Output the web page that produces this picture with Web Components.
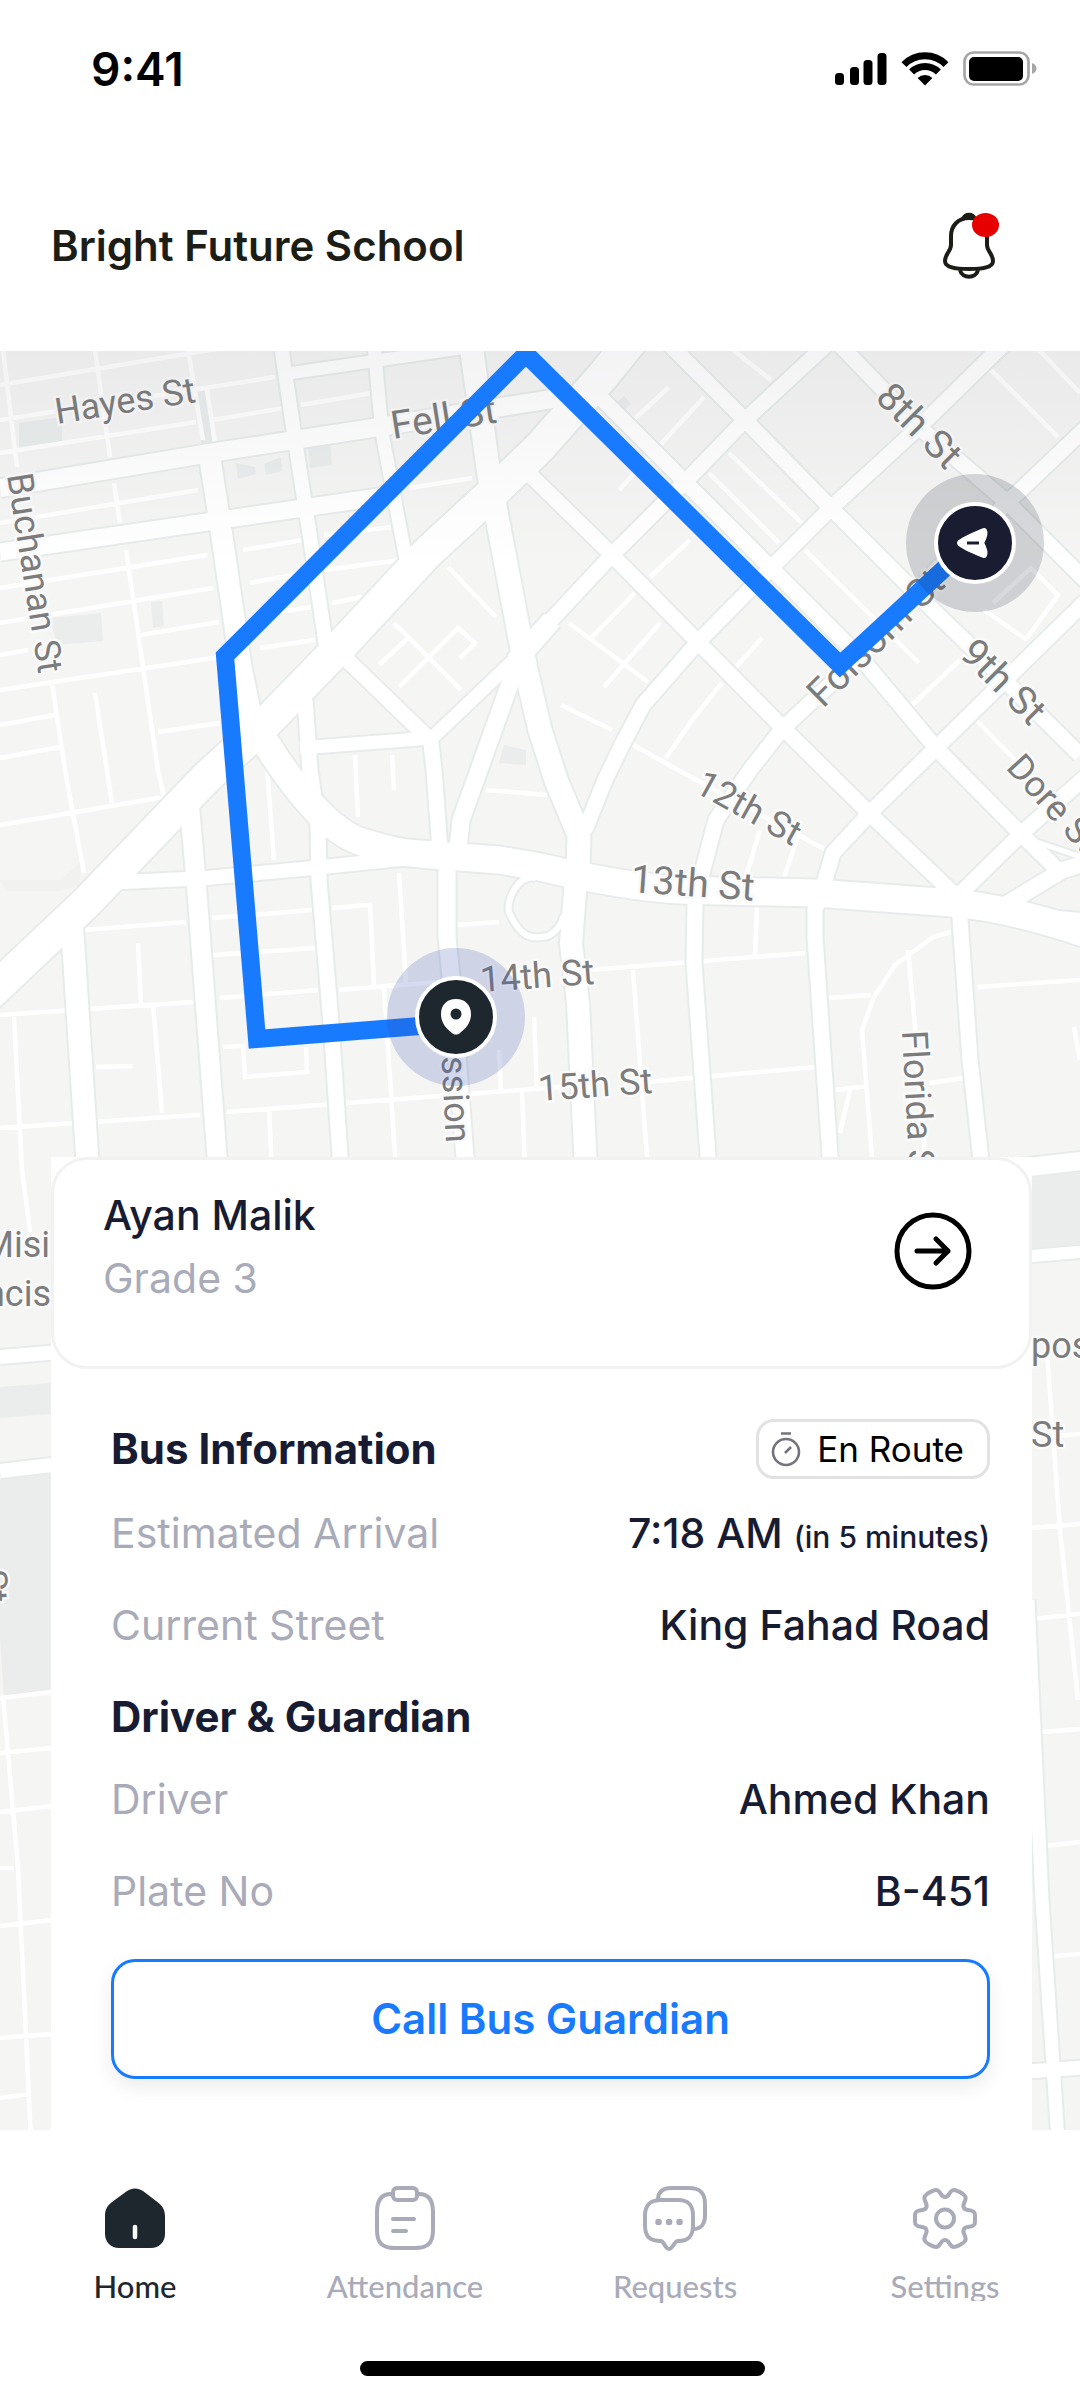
<!DOCTYPE html>
<html lang="en">
<head>
<meta charset="utf-8">
<meta name="viewport" content="width=device-width, initial-scale=1">
<title>Bright Future School</title>
<style>
body {
  margin: 0;
  background: #fff;
  color: #171c33;
  font-family: Inter, "Liberation Sans", sans-serif;
  font-size: 41px;
}
</style>
</head>
<body>
<status-bar>9:41</status-bar>
<app-header>Bright Future School</app-header>
<main>
  <route-map>
    <bus-panel>
      <student-card slot="student">
        <span slot="name">Ayan Malik</span>
        <span slot="grade">Grade 3</span>
      </student-card>
      <info-head>Bus Information <status-pill slot="aside">En Route</status-pill></info-head>
      <info-row label="Estimated Arrival">7:18 AM <small slot="note">(in 5 minutes)</small></info-row>
      <info-row label="Current Street">King Fahad Road</info-row>
      <info-head>Driver &amp; Guardian</info-head>
      <info-row label="Driver">Ahmed Khan</info-row>
      <info-row label="Plate No">B-451</info-row>
      <call-button slot="action">Call Bus Guardian</call-button>
    </bus-panel>
  </route-map>
</main>
<tab-bar>
  <tab-item icon="home" active>Home</tab-item>
  <tab-item icon="clipboard">Attendance</tab-item>
  <tab-item icon="chat">Requests</tab-item>
  <tab-item icon="gear" tight>Settings</tab-item>
</tab-bar>

<script type="module">
const html = (strings, ...parts) => {
	const tpl = document.createElement('template')
	tpl.innerHTML = String.raw({raw: strings}, ...parts)
	return tpl
}

const define = (name, tpl, init) => customElements.define(name, class extends HTMLElement {
	constructor() {
		super()
		this.attachShadow({mode: 'open'}).append(tpl.content.cloneNode(true))
	}
	connectedCallback() {
		if (init) init(this, this.shadowRoot)
	}
})

define('status-bar', html`
<style>
:host {
  align-items: center;
  box-sizing: border-box;
  color: #000;
  display: flex;
  font-size: 46px;
  font-weight: 600;
  height: 137px;
  justify-content: space-between;
  padding: 0 42px 0 91px;
}
svg { display: block; height: 38px; width: 203px; }
</style>
<slot></slot>
<svg viewBox="0 0 203 38" aria-hidden="true">
  <rect x="0" y="23" width="9" height="12" rx="3.5"/>
  <rect x="15" y="17" width="9" height="18" rx="3.5"/>
  <rect x="28.5" y="10" width="9" height="25" rx="3.5"/>
  <rect x="42.5" y="3" width="9" height="32" rx="3.5"/>
  <g fill="none" stroke="#000" stroke-width="7">
    <path d="M69 14.6A29.5 29.5 0 0 1 111 14.6"/>
    <path d="M76.6 22.1A19 19 0 0 1 103.4 22.1"/>
  </g>
  <path d="M90 35.5L82.6 28A10.5 10.5 0 0 1 97.4 28Z"/>
  <rect x="129.5" y="2.5" width="64" height="32" rx="9" fill="none" stroke="#a6a6a6" stroke-width="2.7"/>
  <rect x="134" y="7" width="54" height="24" rx="5"/>
  <path d="M197 13C203 15 203 22 197 24Z" fill="#a6a6a6"/>
</svg>`)

define('app-header', html`
<style>
:host {
  align-items: center;
  box-sizing: border-box;
  color: #1b1d16;
  display: flex;
  height: 214px;
  justify-content: space-between;
  padding: 0 80px 0 51px;
}
h1 { font-size: 42px; font-weight: 600; line-height: 56px; margin: 0; padding-top: 4px; }
button { background: none; border: 0; color: inherit; padding: 0; }
svg { display: block; height: 72px; width: 60px; }
</style>
<h1><slot></slot></h1>
<button aria-label="Notifications">
  <svg viewBox="0 0 60 72" fill="none" stroke="currentColor" stroke-width="4" stroke-linejoin="round">
    <path d="M29 10C18 10 11 18 11 28V37C11 43 5 46 5 53C5 60 17 61 29 61S53 60 53 53C53 46 47 43 47 37V28C47 18 40 10 29 10Z"/>
    <path d="M20 62C22 71 36 71 38 62"/>
    <path d="M23 10C25 5 33 5 35 10Z" fill="currentColor" stroke-width="3"/>
    <ellipse cx="45.5" cy="17" rx="13.5" ry="12" fill="#e60000" stroke="none"/>
  </svg>
</button>`)

// Streets with a casing: [width, path]
const roads = [
	[18, 'M0 488L210 453L379 427L470 412L565 397'],
	[17, 'M0 552L207 522L379 497L400 493'],
	[12, 'M285 374L470 347'],
	[14, 'M281 345L296 447L310 537L328 660'],
	[15, 'M305 700L310 770L318 825L319 880L331 1023L341 1170'],
	[21, 'M209 453L220 523L241 667L255 735'],
	[13, 'M374 345L382 433L396 507L408 570'],
	[23, 'M471 345L489 475L508 575L526 670L540 730L556 780L579 835L578 870'],
	[22, 'M576 880L571 943L578 1003L586 1170'],
	[32, 'M-20 1003L86 903L207 777L262 727L337 650L427 553L503 483L540 447L602 377L632 340'],
	[15, 'M510 455L612 555L698 642L783 728L870 814L955 895'],
	[15, 'M585 382L685 482L771 568L860 657L936 748L1022 835L1060 872'],
	[15, 'M665 340L745 420L831 508L936 613L964 640L1080 755'],
	[15, 'M840 345L919 427L1008 503L1090 585'],
	[15, 'M826 345L745 420L685 482L612 555L540 632'],
	[20, 'M552 620L515 662'],
	[13, 'M535 640L430 740'],
	[15, 'M1003 345L919 427L831 508L771 568L698 642L643 705L622 745L605 780L585 830'],
	[15, 'M1090 424L1008 502L936 570L860 657L783 728L750 770L716 820L702 873L695 903L694 963L709 1170'],
	[15, 'M1090 597L936 748L870 813L833 853L826 877L815 910L815 937L831 1170'],
	[15, 'M1090 773L1022 833L962 892'],
	[15, 'M959 905L970 1060L982 1170'],
	[16, 'M1005 905L1063 870L1090 862'],
	[5, 'M1025 838L1090 860'],
	[5, 'M1040 912L1090 916'],
	[14, 'M103 883L207 878L313 868L410 858'],
	[22, 'M71 910L88 1170'],
	[19, 'M188 790L196 880L218 1170'],
	[15, 'M430 735L434 770L440 850'],
	[17, 'M447 865L447 937L451 977L466 1170'],
	[17, 'M522 650L479 770L461 820L458 850'],
	[15, 'M337 650L430 740'],
	[13, 'M300 748L432 738'],
	[6, 'M536 878C518 874 506 900 509 912C520 937 530 940 548 936Q560 930 564 915'],
	[27, 'M240 710C258 725 262 740 286 773C306 801 335 834 362 842S400 853 420 854L499 860L540 867Q620 886 678 890L815 893L953 903Q1010 908 1090 935'],
	[18, 'M1020 1168L1090 1160'],
	[12, 'M1020 1257L1090 1251'],
	[14, 'M0 1357L60 1352'],
	[14, 'M0 1471L60 1464'],
	[13, 'M1028 1600L1042 1900L1058 2140'],
	[14, 'M1020 2072L1090 2067'],
]

// Alleys, drawn without a casing
const lanes = `M0 385L240 345M0 420L275 377M0 453L196 422M213 420L284 408
M3 350L17 467M95 350L110 457M188 350L203 440M207 390L215 443M301 405L372 393
M0 523L198 490M114 483L120 523M0 588L207 555M0 623L213 588M141 635L219 622M0 655L28 650
M0 690L220 657M126 550L158 770L164 797M52 683L65 770L84 873M95 693L112 803M0 825L164 797
M158 732L220 723M0 725L55 715M0 758L60 747M243 550L303 540M250 583L308 572M257 615L312 607
M260 648L315 640M324 535L393 527M325 570L400 560M332 603L362 597M410 488L472 478
M448 567L496 617M394 623L461 690M399 687L458 628L475 643L460 658M379 665L408 638
M619 490L704 397M630 423L669 387M729 453L802 523M709 473L779 543M650 577L690 540
M733 350L771 380M988 367L1058 437M1039 350L1080 393M805 550L919 663M736 667L762 638
M592 637L635 593M569 623L648 682M604 687L660 623M561 705L612 730M630 743L678 770L826 850
M722 683L692 720L666 758M910 707L960 660M976 720L1022 767M984 610L1027 640
M993 603L1031 568L1058 595L1027 638M83 930L186 922M212 918L312 910M332 908L370 905L374 985
M399 873L406 982M213 955L315 948M0 1015L193 1002M220 998L318 990M339 990L437 982
M0 1128L200 1115M227 1112L560 1087M138 943L141 1003M153 1003L162 1113M96 1067L133 1066
M14 1017L22 1170L30 1232M223 1047L243 1046L245 1077L307 1072L306 1047M269 1110L272 1170
M384 988L396 1170M265 740L274 860M355 755L358 817M392 755L394 790M486 790L547 795
M456 925L499 922M499 1050L501 1090M534 1017L537 1090M522 1092L525 1170
M588 970L805 953M633 970L648 1170M757 907L755 957M647 1082L815 1067M798 837L784 877
M760 830L747 873M951 932L933 937L895 965L874 997L862 1030L873 1170M829 998L871 995
M836 1090L867 1086M850 1090L840 1133M929 1083L964 1078M977 987L1080 980
M908 950L915 1027L926 1170M1074 1027L1080 1060M1047 1353L1060 1530L1078 1700
M1030 1438L1080 1434M1030 1528L1080 1524M1030 1619L1080 1614M1030 1733L1080 1729
M1045 1846L1080 1842M1045 1957L1080 1954M0 1698L52 1692M0 1753L52 1748M0 1812L52 1806
M0 1868L14 1868M0 1926L52 1920M0 2038L52 2034M0 2098L30 2094M3 1696L18 1868L31 2140`

const blocks = `M19 423L62 417V442L19 447ZM196 392L207 390L213 445L201 443ZM236 463L255 467L256 474L238 479Z
M264 464L281 457L282 471L266 475ZM308 448L330 444L332 465L310 468ZM50 618L101 613L103 641L57 645Z
M151 602L162 601L164 626L153 628ZM616 403L624 396L631 404L623 411ZM504 745L526 750V765L499 763Z
M1020 1177L1080 1172V1248L1020 1252ZM0 1387L52 1383V1414L0 1418ZM0 1479L52 1473V1692L4 1696L0 1640Z`

// [x, y, angle, text, class]
const labels = [
	[57, 424, -9, 'Hayes St', 'minor'],
	[393, 439, -9, 'Fell St', 'major'],
	[7, 475, 81, 'Buchanan St', 'minor'],
	[874, 399, 45, '8th St', 'major'],
	[823, 709, -45, 'Folsom St', 'major'],
	[958, 655, 45, '9th St', 'major'],
	[693, 791, 29, '12th St', 'minor'],
	[630, 892, 4, '13th St', 'major'],
	[481, 992, -4, '14th St', 'minor'],
	[539, 1101, -4, '15th St', 'minor'],
	[1005, 768, 48, 'Dore St', 'minor'],
	[902, 1031, 87, 'Florida St', 'minor'],
	[1031, 1358, 0, 'pos', 'minor'],
	[1031, 1447, 0, 'St', 'minor'],
]

define('route-map', html`
<style>
:host {
  background: #f5f5f4;
  box-sizing: border-box;
  display: block;
  overflow: hidden;
  padding: 806px 48px 0 51px;
  position: relative;
}
svg { height: 100%; inset: 0; position: absolute; width: 100%; }
text { fill: #7c7c7c; font: 36px Roboto, sans-serif; paint-order: stroke; stroke: #fafafa; stroke-width: 5px; }
.major { font-size: 39px; }
.lanes { fill: none; stroke: #fff; stroke-width: 4.5px; }
::slotted(*) { position: relative; }
</style>
<svg viewBox="0 351 1080 1779" preserveAspectRatio="xMidYMin slice" role="img" aria-label="Bus route">
  <defs>
    <linearGradient id="shade" x2="0" y2="1">
      <stop stop-color="#5a5a6e" stop-opacity=".07"/>
      <stop offset="1" stop-color="#5a5a6e" stop-opacity="0"/>
    </linearGradient>
  </defs>
  <path d="${blocks}" fill="#eaedec"/>
  <path d="M0 880L60 880L80 863V885L60 891H8Z" fill="#f1f1f0"/>
  <path class="lanes" d="${lanes}"/>
  <g fill="none" stroke="#e7ecea">${roads.map(([w, d]) => `<path d="${d}" stroke-width="${w + 4}"/>`).join('')}</g>
  <g fill="none" stroke="#fff">${roads.map(([w, d]) => `<path d="${d}" stroke-width="${w}"/>`).join('')}</g>
  ${labels.map(([x, y, a, t, c]) => `<text class="${c}" transform="translate(${x} ${y}) rotate(${a})">${t}</text>`).join('')}
  <g text-anchor="end">
    <text transform="translate(446 1143) rotate(87)">Mission</text>
    <text x="50" y="1257">Misi</text>
    <text x="51" y="1306">ncis</text>
    <text transform="translate(-17 1603) rotate(87)">St</text>
  </g>
  <rect y="351" width="1080" height="210" fill="url(#shade)"/>
  <path d="M420 1026L257 1039L225 656L526 354L840 665L960 554" fill="none" stroke="#187bff" stroke-width="18"/>
  <g>
    <circle cx="456" cy="1017" r="69" fill="#324baf" fill-opacity=".2"/>
    <circle cx="456" cy="1017" r="39" fill="#1e272e" stroke="#fff" stroke-width="4"/>
    <path d="M456 999C447 999 441 1005 441 1014C441 1023 446 1028 452 1033C454 1035 458 1035 460 1033C466 1028 471 1023 471 1014C471 1005 465 999 456 999Z" fill="#fff"/>
    <circle cx="456" cy="1014" r="5.5" fill="#1e272e"/>
  </g>
  <g>
    <circle cx="975" cy="543" r="69" fill="#1a1d31" fill-opacity=".17"/>
    <circle cx="975" cy="543" r="39" fill="#1a1d31" stroke="#fff" stroke-width="4"/>
    <path d="M960 543Q962 540 984 531Q986 534 981 543Q986 552 984 555Q962 546 960 543Z" fill="#fff" stroke="#fff" stroke-width="6" stroke-linejoin="round"/>
    <path d="M967 543H979" stroke="#1a1d31" stroke-width="3"/>
  </g>
</svg>
<slot></slot>`)

define('bus-panel', html`
<style>
:host { background: #fff; display: block; }
section { padding: 50px 42px 51px 60px; }
</style>
<slot name="student"></slot>
<section>
  <slot></slot>
  <slot name="action"></slot>
</section>`)

define('student-card', html`
<style>
:host {
  align-items: center;
  background: #fff;
  border: 3px solid #f2f2f2;
  border-radius: 36px;
  box-sizing: border-box;
  display: flex;
  justify-content: space-between;
  padding: 24px 57px 48px 49px;
}
div { line-height: 63px; padding-bottom: 8px; }
p { margin: 0; }
.name { font-weight: 500; }
.grade { color: #a9abb9; }
button { background: none; border: 0; color: #000; padding: 0; }
svg { display: block; height: 78px; width: 78px; }
</style>
<div>
  <p class="name"><slot name="name"></slot></p>
  <p class="grade"><slot name="grade"></slot></p>
</div>
<button aria-label="Open student">
  <svg viewBox="0 0 78 78" fill="none" stroke="currentColor" stroke-width="5" stroke-linecap="round" stroke-linejoin="round">
    <circle cx="39" cy="39" r="36"/>
    <path d="M23 39H54M42 27L54 39L42 51"/>
  </svg>
</button>`)

define('info-head', html`
<style>
:host {
  align-items: center;
  display: flex;
  justify-content: space-between;
  margin-bottom: 26px;
}
h2 { font-size: 42px; font-weight: 700; line-height: 56px; margin: 0; }
</style>
<h2><slot></slot></h2>
<slot name="aside"></slot>`)

define('status-pill', html`
<style>
:host {
  align-items: center;
  border: 3px solid #e2e2e4;
  border-radius: 18px;
  box-sizing: border-box;
  color: #000;
  display: flex;
  font-size: 35px;
  gap: 16px;
  height: 60px;
  padding: 0 23px 0 12px;
}
svg { height: 36px; width: 30px; }
</style>
<svg viewBox="0 0 30 36" fill="none" stroke="#74747e" stroke-width="2.6" aria-hidden="true">
  <circle cx="15" cy="21" r="13"/>
  <path d="M10 2.5H20M14 22L20 16"/>
</svg>
<slot></slot>`)

define('info-row', html`
<style>
:host { display: block; margin-bottom: 36px; }
dl {
  align-items: baseline;
  display: flex;
  justify-content: space-between;
  line-height: 56px;
  margin: 0;
}
dt { color: #a9abb9; }
dd { font-weight: 500; margin: 0; }
::slotted(small) { font-size: 30px; line-height: 30px; }
</style>
<dl><dt></dt><dd><slot></slot><slot name="note"></slot></dd></dl>`, (el, root) => {
	root.querySelector('dt').textContent = el.getAttribute('label')
})

define('call-button', html`
<style>
:host { display: block; padding-top: 4px; }
button {
  background: #fff;
  border: 3px solid #187bff;
  border-radius: 24px;
  box-shadow: 0 8px 20px rgba(0, 0, 0, .08);
  color: #187bff;
  display: block;
  font: 600 42px/56px Inter, "Liberation Sans", sans-serif;
  height: 120px;
  width: 100%;
}
</style>
<button><slot></slot></button>`)

define('tab-bar', html`
<style>
:host { display: block; padding: 54px 0 24px; }
nav { display: grid; grid-template-columns: repeat(4, 1fr); height: 177px; }
.indicator { display: grid; grid-template-columns: 8fr 9fr 7fr; }
.indicator i { background: #000; border-radius: 8px; grid-column: 2; height: 15px; }
</style>
<nav><slot></slot></nav>
<div class="indicator"><i></i></div>`)

const icons = {
	home: `<path d="M26 7C31 3.5 37 3.5 42 7L57 18.5C62 22 64 27 64 32V50C64 58 58 64 50 64H18C10 64 4 58 4 50V32C4 26 6 22 11 18Z" fill="currentColor" stroke="none"/>
		<path d="M34 43V53" stroke="#fff" stroke-width="4.5"/>`,
	clipboard: `<path d="M20 10C10 10 6 17 6 28V46C6 59 11 64 24 64H44C57 64 62 59 62 46V28C62 17 58 10 48 10"/>
		<rect x="22" y="4" width="24" height="12" rx="4"/>
		<path d="M22 35H43M22 47H35"/>`,
	chat: `<path d="M17 14C18 7 22 4 30 4H48C59 4 64 9 64 20V31C64 40 60 45 53 45"/>
		<path d="M20 57C8 57 4 52 4 41V32C4 21 9 16 20 16H37C48 16 52 21 52 32V41C52 52 48 57 37 57C33 57 32 65 28 65S23 57 20 57Z"/>
		<path d="M17.5 38H17.6M28 38H28.1M38.5 38H38.6" stroke-width="6.5"/>`,
	gear: `<path d="M34 13C39 13 38 6 43 6C45 6 52 9 54 12C57 16 50 20 53 24C55 28 64 24 64 31V38C64 45 55 41 53 45C50 49 57 53 54 57C52 60 45 63 43 63C38 63 39 56 34 56C29 56 30 63 25 63C23 63 16 60 14 57C11 53 18 49 15 45C13 41 4 45 4 38V31C4 24 13 28 15 24C18 20 11 16 14 12C16 9 23 6 25 6C30 6 29 13 34 13Z"/>
		<circle cx="34" cy="34.5" r="9"/>`,
}

define('tab-item', html`
<style>
:host { color: #a9abb9; display: block; }
:host([active]) { color: #1e272e; }
a {
  align-items: center;
  color: inherit;
  display: flex;
  flex-direction: column;
  font: 500 31px/36px Lato, sans-serif;
  gap: 16px;
  text-decoration: none;
}
svg { height: 68px; width: 68px; }
:host([tight]) span { height: 33px; overflow: hidden; }
</style>
<a href="#">
  <svg viewBox="0 0 68 68" fill="none" stroke="currentColor" stroke-width="4" stroke-linecap="round" stroke-linejoin="round" aria-hidden="true"></svg>
  <span><slot></slot></span>
</a>`, (el, root) => {
	root.querySelector('svg').innerHTML = icons[el.getAttribute('icon')]
})
</script>
</body>
</html>
